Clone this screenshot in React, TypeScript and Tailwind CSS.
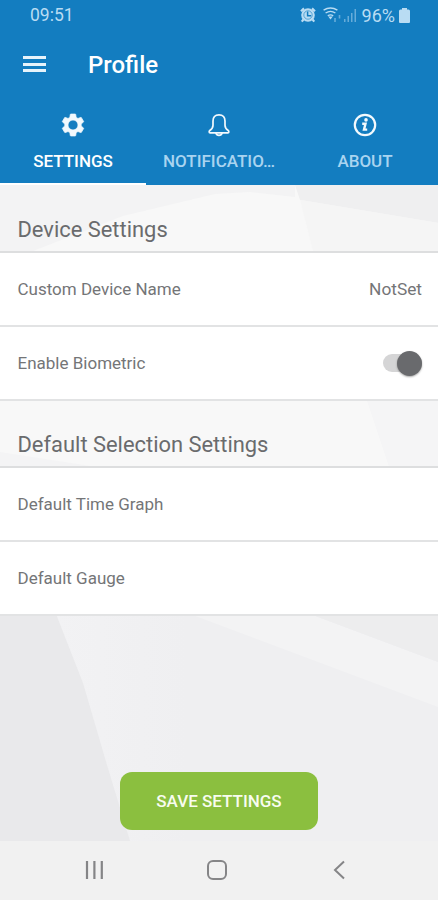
import React, { useState } from 'react';

type TabKey = 'settings' | 'notifications' | 'about';

const GearIcon = () => (
  <svg width="28" height="28" viewBox="-.8 -.8 25.6 25.6" fill="currentColor" stroke="currentColor" strokeWidth=".7" strokeLinejoin="round">
    <path d="M19.43 12.98c.04-.32.07-.64.07-.98s-.03-.66-.07-.98l2.11-1.65c.19-.15.24-.42.12-.64l-2-3.46c-.12-.22-.39-.3-.61-.22l-2.49 1c-.52-.4-1.08-.73-1.69-.98l-.38-2.65C14.46 2.18 14.25 2 14 2h-4c-.25 0-.46.18-.49.42l-.38 2.65c-.61.25-1.17.59-1.69.98l-2.49-1c-.23-.09-.49 0-.61.22l-2 3.46c-.13.22-.07.49.12.64l2.11 1.65c-.04.32-.07.65-.07.98s.03.66.07.98l-2.11 1.65c-.19.15-.24.42-.12.64l2 3.460c.12.22.39.3.61.22l2.49-1c.52.4 1.080.73 1.690.98l.38 2.650c.03.24.24.42.49.42h4c.25 0 .46-.18.49-.42l.38-2.650c.61-.25 1.170-.59 1.690-.98l2.490 1c.23.09.49 0 .61-.22l2-3.460c.12-.22.07-.49-.12-.64l-2.110-1.650zM12 16.600a4.600 4.600 0 1 1 0-9.200 4.600 4.600 0 0 1 0 9.200z" />
  </svg>
);

const BellIcon = () => (
  <svg width="28" height="28" viewBox="0 0 28 28" fill="none" stroke="currentColor" strokeWidth="1.7" strokeLinejoin="round">
    <path d="M14 3.900c-4.200 0-6 2.500-6 6v4.300c0 2.900-1.200 3.900-3.200 5.300-.9.700-.9 2.300.3 2.300h17.800c1.200 0 1.200-1.600.3-2.300-2-1.400-3.200-2.400-3.200-5.300V9.900c0-3.500-1.800-6-6-6z" />
    <path d="M10.800 22c.5 1.500 1.600 2.300 3.200 2.300s2.700-.8 3.200-2.300" />
  </svg>
);

const InfoIcon = () => (
  <svg width="28" height="28" viewBox="0 0 28 28" fill="none" stroke="currentColor">
    <circle cx="14" cy="14" r="10.200" strokeWidth="2.200" />
    <circle cx="15" cy="8.900" r="1.800" fill="currentColor" stroke="none" />
    <path d="M11.200 12.700h3.300l-1.500 5.900h3.200" strokeWidth="2.400" />
  </svg>
);

const tabs: { key: TabKey; label: string; icon: React.ReactNode }[] = [
  { key: 'settings', label: 'SETTINGS', icon: <GearIcon /> },
  { key: 'notifications', label: 'NOTIFICATIO…', icon: <BellIcon /> },
  { key: 'about', label: 'ABOUT', icon: <InfoIcon /> },
];

function StatusBar() {
  return (
    <div className="flex h-[30px] items-center justify-between pl-[30px] pr-[28px] text-[#b9dcf3]">
      <span className="text-[17.5px]">09:51</span>
      <div className="flex items-center">
        {/* alarm */}
        <svg width="16" height="16" viewBox="0 0 16 16" fill="none" stroke="currentColor">
          <circle cx="8" cy="8" r="6.800" fill="currentColor" stroke="none" />
          <path d="M1 4.200 4 1.400M15 4.200 12 1.400M3.400 12.500 1.800 14.600M12.600 12.500l1.600 2.100" strokeWidth="2.200" />
          <path d="M7.600 4.500v4.200h3.600" stroke="#137dc0" strokeWidth="1.500" />
          <circle cx="8" cy="8" r="4.200" stroke="#137dc0" strokeWidth=".6" />
        </svg>
        {/* wifi */}
        <svg className="ml-[7px]" width="19" height="16" viewBox="0 0 19 16" fill="none" stroke="currentColor" strokeWidth="1.400">
          <path d="M.6 3.200C4.800.6 10.200.6 14.400 3.200M2.600 6c3-2 6.800-2 9.800 0M4.800 8.800c1.800-1.200 3.600-1.200 5.400 0" />
          <path d="M5.300 9.400h4.400L7.500 12.400z" fill="currentColor" stroke="none" />
          <path d="M12 11v4M16.500 8v3.500" strokeWidth="1.600" opacity=".5" />
        </svg>
        {/* signal */}
        <svg className="ml-[1px]" width="14" height="16" viewBox="0 0 14 16" fill="currentColor" opacity=".5">
          <path d="M1 12h1.500v3H1zM4.500 9H6v6H4.500zM8 6h1.500v9H8zM11.500 2H13v13h-1.500z" />
        </svg>
        <span className="ml-[5px] text-[18px]">96%</span>
        {/* battery */}
        <svg className="ml-[4px]" width="11" height="15" viewBox="0 0 11 15" fill="currentColor">
          <path d="M3 0h5v1.500h1.500A1.500 1.500 0 0 1 11 3v11A1 1 0 0 1 10 15h-9A1 1 0 0 1 0 14V3A1.500 1.500 0 0 1 1.500 1.500H3z" />
        </svg>
      </div>
    </div>
  );
}

function SectionTitle({ children }: { children: React.ReactNode }) {
  return (
    <h2 className="flex h-full items-end border-b-2 border-[#dddedf] pb-[5px] pl-[17.5px] text-[21.9px] leading-[32px] text-[#6a6b6d]">
      {children}
    </h2>
  );
}

function SettingRow({ label, children }: { label: string; children?: React.ReactNode }) {
  return (
    <div className="flex items-center justify-between border-b-2 border-[#e2e3e4] bg-white pl-[17.5px] pr-[16px] text-[17px] text-[#747577]">
      <span className="pt-[2px]">{label}</span>
      {children}
    </div>
  );
}

// Faceted grey backdrop behind the sections
function Backdrop() {
  return (
    <svg className="absolute inset-0 -z-10" width="438" height="656" viewBox="0 185 438 656">
      <defs>
        <linearGradient id="facet" x1="0" x2="1">
          <stop offset="0" stopColor="#f2f2f4" />
          <stop offset="1" stopColor="#efeff1" />
        </linearGradient>
      </defs>
      <path fill="#f8f8f8" d="M0 185h438v300H0z" />
      <path fill="#f3f3f4" d="M0 185h295v12l-45-5-35 2-92 22-95 37H0z" />
      <path fill="#efeff0" d="M295 185h143v38l-138-23z" />
      <path fill="#f5f5f5" d="M300 200l138 23v32H314z" />
      <path fill="#f5f5f6" d="M366 398h72v72h-48z" />
      <path fill="#f4f4f5" d="M0 452l110 17H0z" />
      <path fill="#efeff1" d="M0 600h438v241H0z" />
      <path fill="url(#facet)" d="M56 614h130v227h-56z" />
      <path fill="#e9e9eb" d="M0 614h56l27 69 24 82 23 76H0z" />
      <path fill="#f3f3f4" d="M190 614h120l128 48v45z" />
      <path fill="#ededee" d="M310 614h128v48z" />
    </svg>
  );
}

export default function ProfileSettings() {
  const [activeTab, setActiveTab] = useState<TabKey>('settings');
  const [biometric, setBiometric] = useState(true);

  return (
    <div className="flex h-[900px] w-[438px] flex-col overflow-hidden bg-[#f1f1f1] font-[Roboto,sans-serif]">
      <header className="h-[185px] bg-[#137dc0] text-white">
        <StatusBar />

        <div className="flex h-[68px] items-center pl-[23px]">
          <button aria-label="Menu" className="flex w-[23px] flex-col gap-[3.5px]">
            <span className="h-[3px] bg-[#e6f3fb]" />
            <span className="h-[3px] bg-[#e6f3fb]" />
            <span className="h-[3px] bg-[#e6f3fb]" />
          </button>
          <h1 className="ml-[42px] pt-[2px] text-[24px] font-medium">Profile</h1>
        </div>

        <nav className="grid h-[87px] grid-cols-3">
          {tabs.map((tab) => (
            <button
              key={tab.key}
              onClick={() => setActiveTab(tab.key)}
              className={`flex flex-col items-center border-b-2 pt-[13px] ${
                activeTab === tab.key ? 'border-white text-white' : 'border-transparent text-[#a9d4f0]'
              }`}
            >
              <span className="text-[#f2f9fd]">{tab.icon}</span>
              <span className="mt-[11px] text-[17px] font-medium leading-[22px]">{tab.label}</span>
            </button>
          ))}
        </nav>
      </header>

      <main className="relative isolate grid h-[656px] grid-rows-[68px_148px_67px_148px_1fr]">
        <Backdrop />

        <SectionTitle>Device Settings</SectionTitle>
        <div className="grid grid-rows-2">
          <SettingRow label="Custom Device Name">
            <span className="pt-[2px] text-[17.3px]">NotSet</span>
          </SettingRow>
          <SettingRow label="Enable Biometric">
            <button
              role="switch"
              aria-checked={biometric}
              aria-label="Enable Biometric"
              onClick={() => setBiometric(!biometric)}
              className={`flex h-[18px] w-[39px] items-center rounded-full bg-[#d5d5d6] ${biometric ? 'justify-end' : 'justify-start'}`}
            >
              <span className="size-[25px] rounded-full bg-[#696a6d] shadow-[0_1px_2px_rgba(0,0,0,0.35)]" />
            </button>
          </SettingRow>
        </div>

        <SectionTitle>Default Selection Settings</SectionTitle>
        <div className="grid grid-rows-2">
          <SettingRow label="Default Time Graph" />
          <SettingRow label="Default Gauge" />
        </div>

        <div className="flex items-end justify-center pb-[11px]">
          <button className="h-[58px] w-[198px] rounded-[12px] bg-[#8bbf3f] pt-[2px] text-[17px] font-medium text-[#f8fcef]">
            SAVE SETTINGS
          </button>
        </div>
      </main>

      {/* Android navigation bar */}
      <footer className="flex h-[59px] items-center justify-between pb-px pl-[84px] pr-[88px] text-[#858587]">
        <svg width="20" height="20" viewBox="0 0 20 20" stroke="currentColor" strokeWidth="2.200">
          <path d="M3 1v18M10.400 1v18M17.800 1v18" />
        </svg>
        <svg width="20" height="20" viewBox="0 0 20 20" fill="none" stroke="currentColor" strokeWidth="2">
          <rect x="1" y="1" width="18" height="18" rx="5" />
        </svg>
        <svg width="20" height="20" viewBox="0 0 20 20" fill="none" stroke="currentColor" strokeWidth="2">
          <path d="M14 1.500 5 10l9 8.500" />
        </svg>
      </footer>
    </div>
  );
}
